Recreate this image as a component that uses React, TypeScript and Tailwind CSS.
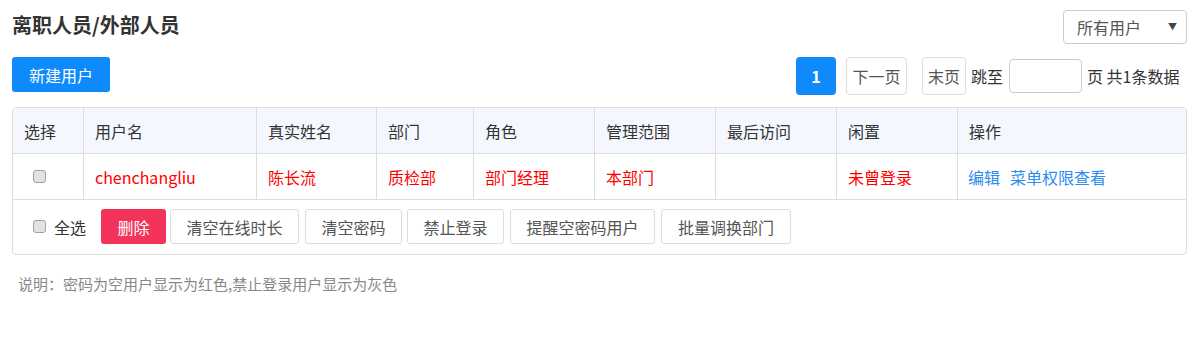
import React from "react";

function Check() {
  return (
    <span className="inline-block w-[13px] h-[13px] rounded-[3px] border border-[#a3a3a3] bg-[#e2e2e2] shrink-0" />
  );
}

const headers = ["选择", "用户名", "真实姓名", "部门", "角色", "管理范围", "最后访问", "闲置", "操作"];

export default function App() {
  const gridCols =
    "grid grid-cols-[70px_173px_120px_97px_121px_121px_121px_121px_1fr]";
  return (
    <div className="w-[1198px] h-[347px] bg-white px-[12px] pr-[11px] pt-[10px] font-['Noto_Sans_CJK_SC','Noto_Sans',sans-serif] text-[#333]">
      {/* Row 1 */}
      <div className="flex items-start justify-between">
        <div className="mt-[1px] text-[20px] leading-[28px] font-bold text-[#333]">离职人员/外部人员</div>
        <div className="w-[124px] h-[34px] border border-[#cccccc] rounded-[4px] flex items-center justify-between pl-[13px] pr-[9px] text-[16px] leading-[20px] text-[#555]">
          <span>所有用户</span>
          <span className="text-[9px] leading-[10px] text-[#444]">▼</span>
        </div>
      </div>

      {/* Row 2 */}
      <div className="mt-[13px] flex items-start justify-between">
        <button className="w-[98px] h-[35px] rounded-[3px] bg-[#0f8afd] text-white text-[16px] leading-[20px]">新建用户</button>
        <div className="flex items-center pr-[4px] text-[16px] leading-[20px]">
          <span className="w-[40px] h-[38px] rounded-[4px] bg-[#0f8afd] text-white font-bold flex items-center justify-center">1</span>
          <span className="ml-[10px] w-[61px] h-[38px] border border-[#dddddd] rounded-[4px] flex items-center justify-center text-[#555]">下一页</span>
          <span className="ml-[15px] w-[44px] h-[38px] border border-[#dddddd] rounded-[4px] flex items-center justify-center text-[#555]">末页</span>
          <span className="ml-[5px] w-[33px] text-[#333]">跳至</span>
          <span className="ml-[5px] w-[73px] h-[34px] border border-[#cccccc] rounded-[4px]" />
          <span className="ml-[5px] w-[96px] whitespace-nowrap text-[#333]">页 共1条数据</span>
        </div>
      </div>

      {/* Table */}
      <div className="mt-[12px] border border-[#dddddd] rounded-[4px] overflow-hidden text-[16px] leading-[20px]">
        <div className={`${gridCols} bg-[#f4f8fe] border-b border-[#dddddd] h-[46px]`}>
          {headers.map((h, i) => (
            <div
              key={h}
              className={`flex items-center pl-[11px] text-[#333] ${i > 0 ? "border-l border-[#dddddd]" : "pl-[10px]"}`}
            >
              {h}
            </div>
          ))}
        </div>
        <div className={`${gridCols} border-b border-[#dddddd] h-[46px]`}>
          <div className="flex items-center pl-[20px]">
            <Check />
          </div>
          <div className="flex items-center pl-[11px] border-l border-[#dddddd] text-[#ff0000]">chenchangliu</div>
          <div className="flex items-center pl-[11px] border-l border-[#dddddd] text-[#ff0000]">陈长流</div>
          <div className="flex items-center pl-[11px] border-l border-[#dddddd] text-[#ff0000]">质检部</div>
          <div className="flex items-center pl-[11px] border-l border-[#dddddd] text-[#ff0000]">部门经理</div>
          <div className="flex items-center pl-[11px] border-l border-[#dddddd] text-[#ff0000]">本部门</div>
          <div className="flex items-center pl-[11px] border-l border-[#dddddd]"></div>
          <div className="flex items-center pl-[11px] border-l border-[#dddddd] text-[#ff0000]">未曾登录</div>
          <div className="flex items-center gap-[10px] pl-[10px] border-l border-[#dddddd] text-[#2d8cf0]">
            <span>编辑</span>
            <span>菜单权限查看</span>
          </div>
        </div>
        <div className="flex items-center h-[54px] pl-[20px] pb-[1px]">
          <Check />
          <span className="ml-[8px] text-[#333]">全选</span>
          <button className="ml-[15px] h-[35px] w-[65px] rounded-[3px] bg-[#f4335b] text-white">删除</button>
          <button className="ml-[4px] h-[35px] w-[129px] rounded-[3px] border border-[#dddddd] text-[#555]">清空在线时长</button>
          <button className="ml-[6px] h-[35px] w-[97px] rounded-[3px] border border-[#dddddd] text-[#555]">清空密码</button>
          <button className="ml-[5px] h-[35px] w-[97px] rounded-[3px] border border-[#dddddd] text-[#555]">禁止登录</button>
          <button className="ml-[6px] h-[35px] w-[145px] rounded-[3px] border border-[#dddddd] text-[#555]">提醒空密码用户</button>
          <button className="ml-[6px] h-[35px] w-[130px] rounded-[3px] border border-[#dddddd] text-[#555]">批量调换部门</button>
        </div>
      </div>

      <div className="mt-[19px] ml-[6px] text-[15px] leading-[20px] text-[#888]">说明：密码为空用户显示为红色,禁止登录用户显示为灰色</div>
    </div>
  );
}
